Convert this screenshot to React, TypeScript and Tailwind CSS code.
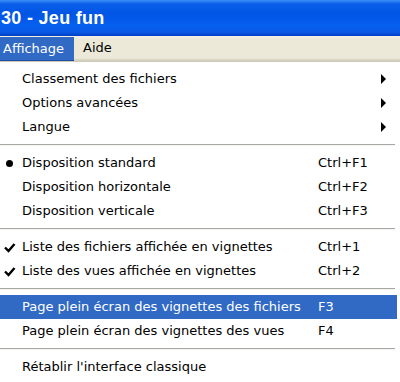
import React from "react";

type Item =
  | { kind: "sep" }
  | {
      kind: "item";
      label: string;
      shortcut?: string;
      sub?: boolean;
      mark?: "dot" | "check";
      active?: boolean;
    };

const items: Item[] = [
  { kind: "item", label: "Classement des fichiers", sub: true },
  { kind: "item", label: "Options avancées", sub: true },
  { kind: "item", label: "Langue", sub: true },
  { kind: "sep" },
  { kind: "item", label: "Disposition standard", shortcut: "Ctrl+F1", mark: "dot" },
  { kind: "item", label: "Disposition horizontale", shortcut: "Ctrl+F2" },
  { kind: "item", label: "Disposition verticale", shortcut: "Ctrl+F3" },
  { kind: "sep" },
  { kind: "item", label: "Liste des fichiers affichée en vignettes", shortcut: "Ctrl+1", mark: "check" },
  { kind: "item", label: "Liste des vues affichée en vignettes", shortcut: "Ctrl+2", mark: "check" },
  { kind: "sep" },
  { kind: "item", label: "Page plein écran des vignettes des fichiers", shortcut: "F3", active: true },
  { kind: "item", label: "Page plein écran des vignettes des vues", shortcut: "F4" },
  { kind: "sep" },
  { kind: "item", label: "Rétablir l'interface classique" },
];

function Mark({ type, active }: { type?: "dot" | "check"; active?: boolean }) {
  const color = active ? "#ffffff" : "#000000";
  if (type === "dot")
    return <span className="block w-[7px] h-[7px] rounded-full bg-black ml-[6px]" />;
  if (type === "check")
    return (
      <svg width="12" height="11" viewBox="0 0 12 11" className="ml-[4px]">
        <path d="M1 5.5 L4.5 9 L10.5 2" stroke={color} strokeWidth="2.4" fill="none" />
      </svg>
    );
  return null;
}

export default function App() {
  return (
    <div
      className="w-[400px] h-[382px] overflow-hidden bg-white text-[13px] text-black"
      style={{ fontFamily: '"DejaVu Sans", Tahoma, sans-serif' }}
    >
      {/* title bar */}
      <div className="h-[36px] flex items-center bg-[linear-gradient(to_bottom,#3d8ff7_0px,#0a5ee8_4px,#0055e5_14px,#0660f0_26px,#0a5ae6_32px,#0040c4_36px)]">
        <span
          className="pl-[1px] text-white font-bold text-[18px] tracking-[0.3px]"
          style={{ fontFamily: '"Liberation Sans", Arial, sans-serif' }}
        >
          30 - Jeu fun
        </span>
      </div>

      {/* menu bar */}
      <div className="h-[26px] flex bg-[linear-gradient(to_bottom,#f6f0ea_0px,#ece9d8_3px,#ece9d8_22px,#d8d4c4_24px,#c9c6b6_26px)]">
        <div className="w-[74px] h-[24px] mt-[1px] bg-[#316ac5] border-b border-[#1f4ea0] text-white flex items-center pl-[3px]">
          Affichage
        </div>
        <div className="flex items-center pl-[9px] h-[24px]">Aide</div>
      </div>

      {/* dropdown */}
      <div className="pt-[5px] pr-[3px]">
        {items.map((it, i) =>
          it.kind === "sep" ? (
            <div key={i} className="h-[12px] pt-[5px] pr-[2px]">
              <div className="h-[1px] bg-[#a7a6a0]" />
              <div className="h-[1px] bg-[#f4f4f4]" />
            </div>
          ) : (
            <div
              key={i}
              className={`h-[24px] flex items-center ${it.active ? "bg-[#316ac5] text-white" : ""}`}
            >
              <div className="w-[22px] flex items-center">
                <Mark type={it.mark} active={it.active} />
              </div>
              <div className="w-[296px] whitespace-nowrap">{it.label}</div>
              <div className="flex-1 whitespace-nowrap">{it.shortcut}</div>
              {it.sub && (
                <svg width="6" height="10" viewBox="0 0 6 10" className="mr-[10px]">
                  <path d="M0 0 L5 5 L0 10 Z" fill="#000" />
                </svg>
              )}
            </div>
          )
        )}
      </div>
    </div>
  );
}
